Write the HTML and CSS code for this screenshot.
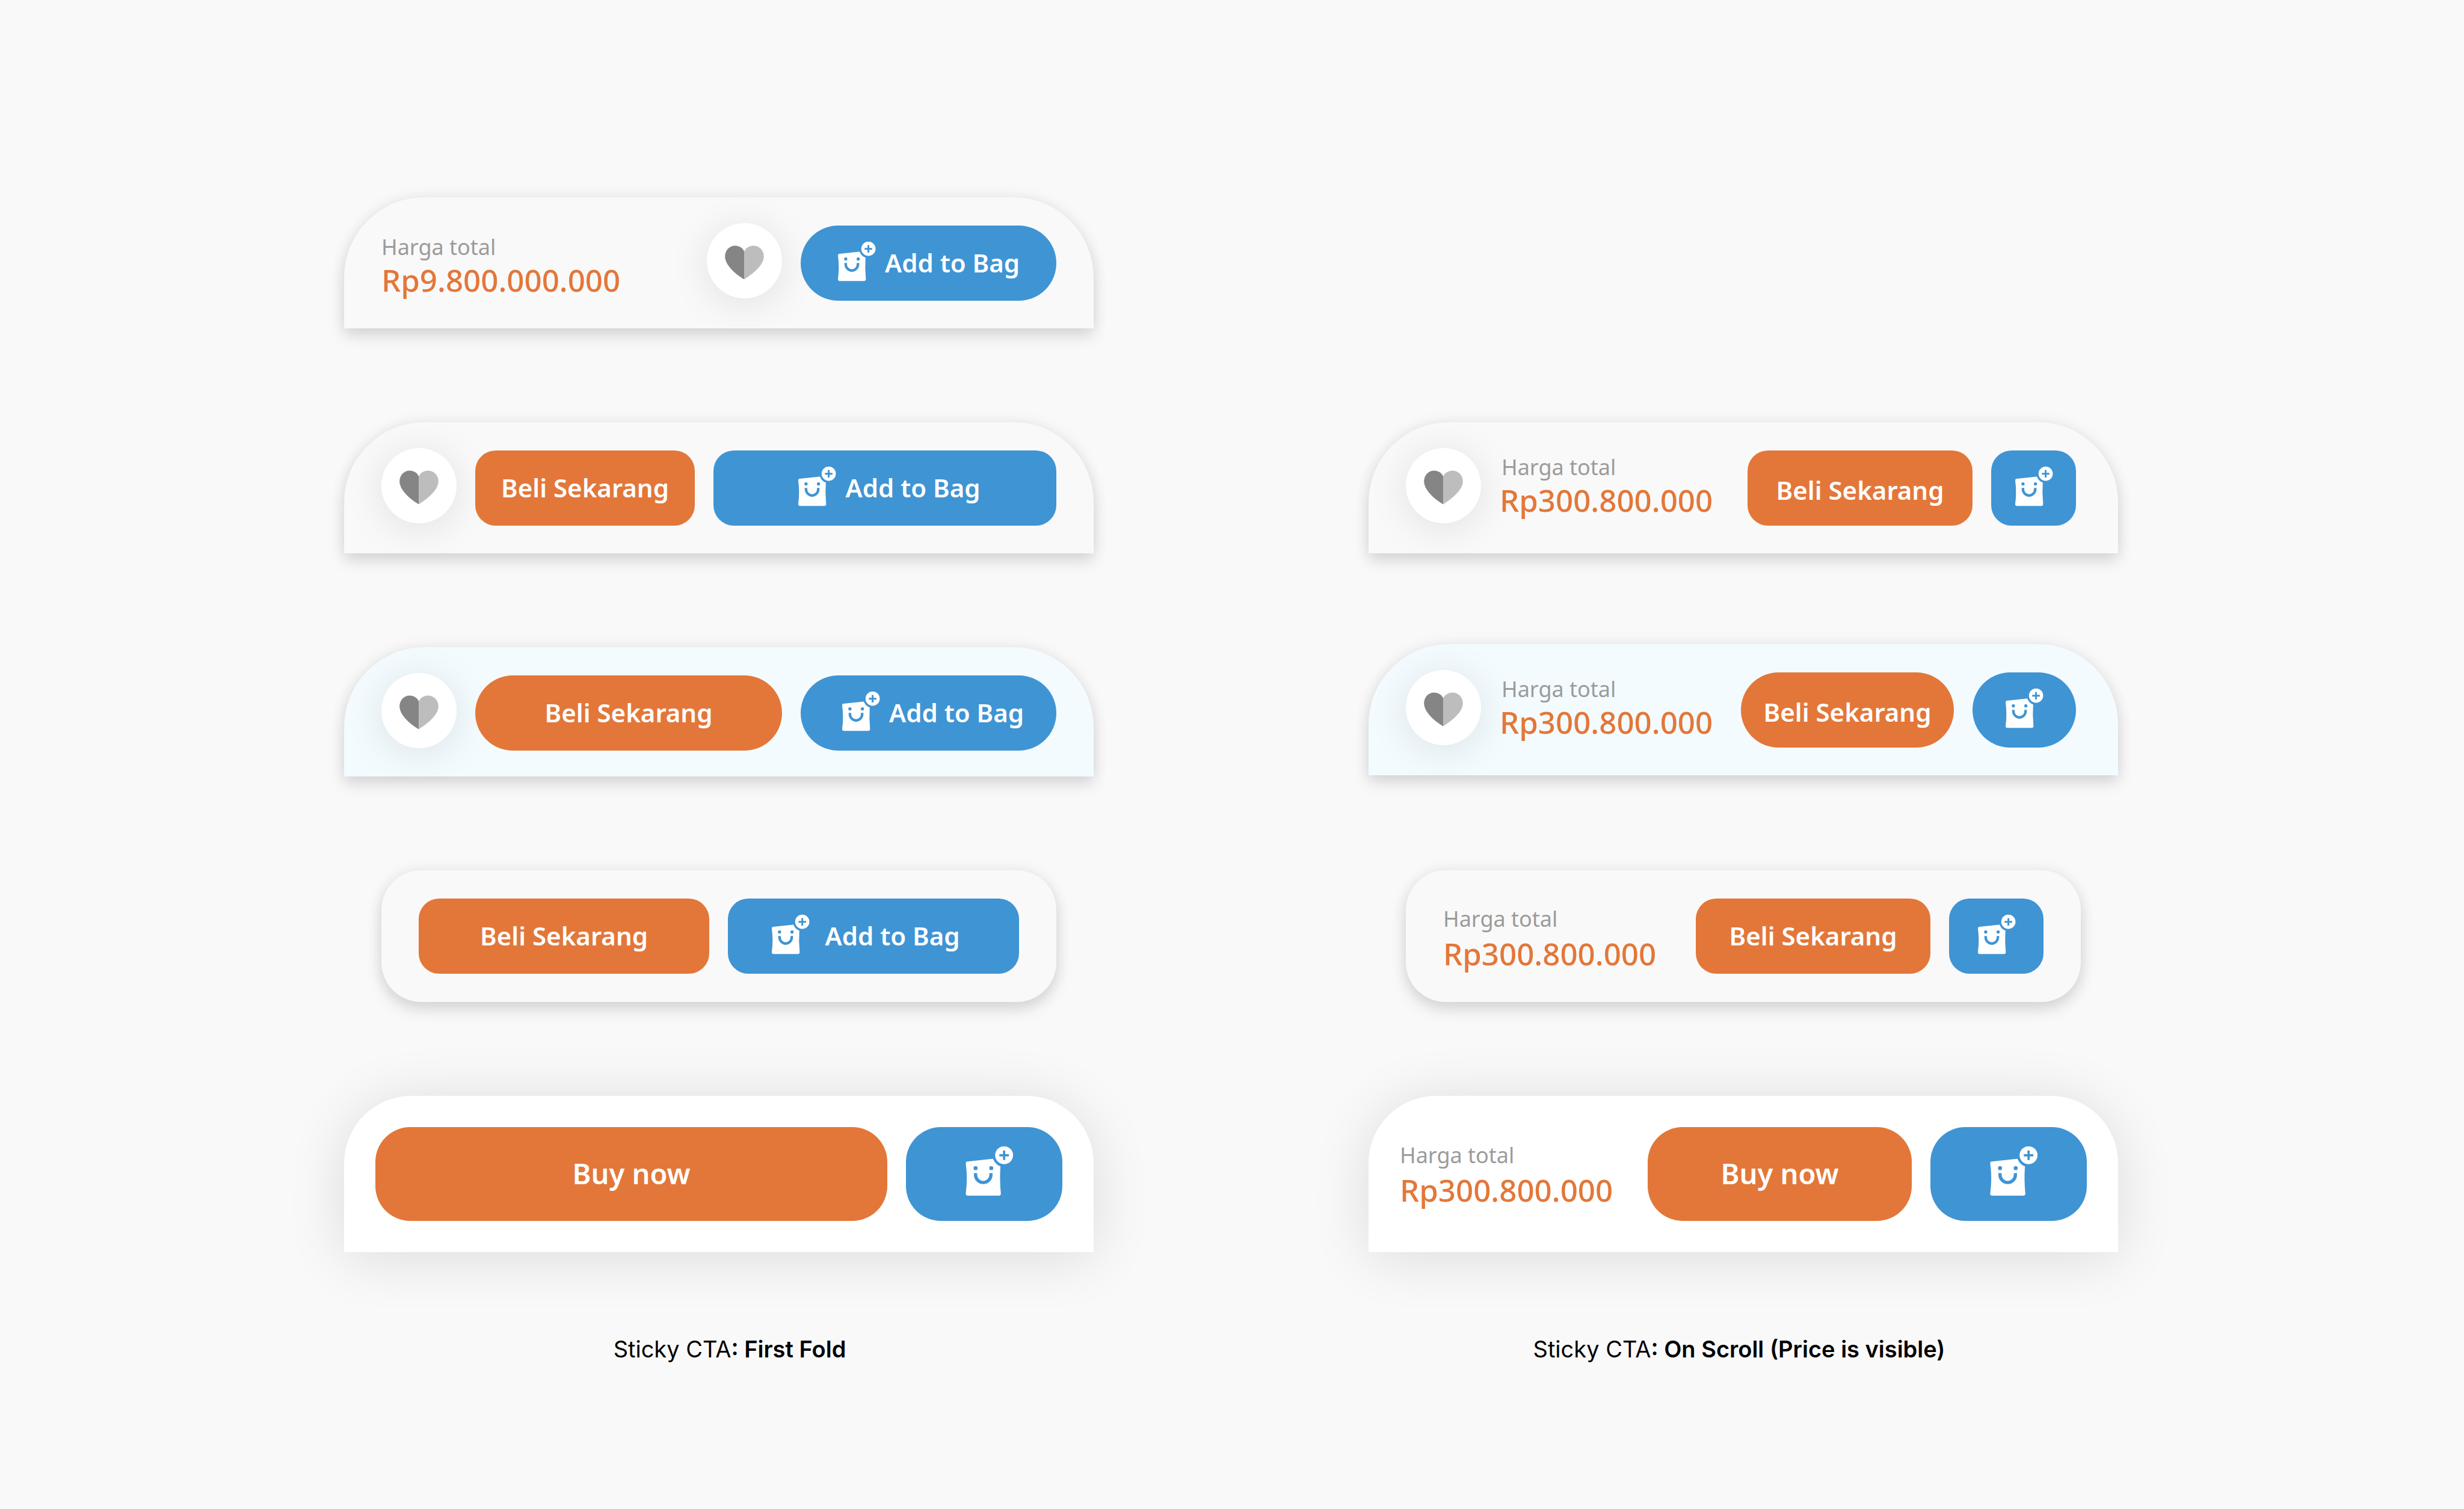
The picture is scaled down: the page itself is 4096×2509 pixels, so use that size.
FILE: index.html
```html
<!DOCTYPE html>
<html lang="id">
<head>
<meta charset="utf-8">
<meta name="viewport" content="width=device-width, initial-scale=1">
<title>Sticky CTA</title>
<link rel="stylesheet" href="styles.css">
</head>
<body>
<svg class="sprite" aria-hidden="true">
  <symbol id="heart" viewBox="219 218 353 306">
    <path fill="#858585" d="M393 523C300 470 220 388 220 316C220 260 261 219 312 219C348 219 378 238 393 270Z"/>
    <path fill="#bdbdbd" d="M393 523C492 462 571 385 571 316C571 260 528 219 476 219C440 219 410 238 393 270Z"/>
  </symbol>
  <symbol id="bag" viewBox="150 96 346 361">
    <path fill="#fff" d="M155 222Q155 210 167 209L346 190Q352 190 354 198A84 84 0 0 0 403 243Q396 340 406 438Q406 453 392 453H169Q155 453 155 438Q170 330 155 222Z"/>
    <circle cx="429" cy="164" r="64" fill="#fff"/>
    <g fill="#3f94d4">
      <rect x="211" y="242" width="28" height="28" rx="11"/>
      <rect x="323" y="242" width="28" height="28" rx="11"/>
    </g>
    <g fill="none" stroke="#3f94d4">
      <path stroke-width="23" d="M225 292V304A55 55 0 0 0 335 304V292"/>
      <path stroke-width="16" d="M395 164H463M429 130V198"/>
    </g>
  </symbol>
</svg>

<main class="board">
  <section class="bar bar--dome">
    <div class="price price--low">
      <span class="price__label">Harga total</span>
      <span class="price__value">Rp9.800.000.000</span>
    </div>
    <button class="fav" type="button" aria-label="Wishlist"><svg class="fav__icon"><use href="#heart"/></svg></button>
    <button class="btn btn--blue btn--pill w-425" type="button"><svg class="bag"><use href="#bag"/></svg>Add to Bag</button>
  </section>
  <div></div>

  <section class="bar bar--dome">
    <button class="fav" type="button" aria-label="Wishlist"><svg class="fav__icon"><use href="#heart"/></svg></button>
    <button class="btn btn--orange w-365" type="button">Beli Sekarang</button>
    <button class="btn btn--blue btn--grow btn--right" type="button"><svg class="bag"><use href="#bag"/></svg>Add to Bag</button>
  </section>
  <section class="bar bar--dome bar--inset">
    <button class="fav" type="button" aria-label="Wishlist"><svg class="fav__icon"><use href="#heart"/></svg></button>
    <div class="price price--beside">
      <span class="price__label">Harga total</span>
      <span class="price__value">Rp300.800.000</span>
    </div>
    <button class="btn btn--orange btn--drop w-374" type="button">Beli Sekarang</button>
    <button class="btn btn--blue w-141" type="button" aria-label="Add to Bag"><svg class="bag"><use href="#bag"/></svg></button>
  </section>

  <section class="bar bar--dome bar--ice bar--short">
    <button class="fav" type="button" aria-label="Wishlist"><svg class="fav__icon"><use href="#heart"/></svg></button>
    <button class="btn btn--orange btn--pill btn--grow" type="button">Beli Sekarang</button>
    <button class="btn btn--blue btn--pill btn--right w-425" type="button"><svg class="bag"><use href="#bag"/></svg>Add to Bag</button>
  </section>
  <section class="bar bar--dome bar--ice bar--inset bar--raised">
    <button class="fav" type="button" aria-label="Wishlist"><svg class="fav__icon"><use href="#heart"/></svg></button>
    <div class="price price--beside">
      <span class="price__label">Harga total</span>
      <span class="price__value">Rp300.800.000</span>
    </div>
    <button class="btn btn--orange btn--pill btn--drop w-354" type="button">Beli Sekarang</button>
    <button class="btn btn--blue btn--pill w-172" type="button" aria-label="Add to Bag"><svg class="bag"><use href="#bag"/></svg></button>
  </section>

  <section class="bar bar--card">
    <button class="btn btn--orange btn--grow" type="button">Beli Sekarang</button>
    <button class="btn btn--blue btn--grow btn--spread" type="button"><svg class="bag"><use href="#bag"/></svg>Add to Bag</button>
  </section>
  <section class="bar bar--card">
    <div class="price price--open price--low">
      <span class="price__label">Harga total</span>
      <span class="price__value">Rp300.800.000</span>
    </div>
    <button class="btn btn--orange w-390" type="button">Beli Sekarang</button>
    <button class="btn btn--blue w-157" type="button" aria-label="Add to Bag"><svg class="bag"><use href="#bag"/></svg></button>
  </section>

  <section class="bar bar--large">
    <button class="btn btn--orange btn--large btn--grow" type="button">Buy now</button>
    <button class="btn btn--blue btn--large btn--bag w-260" type="button" aria-label="Add to Bag"><svg class="bag bag--large"><use href="#bag"/></svg></button>
  </section>
  <section class="bar bar--large">
    <div class="price price--open">
      <span class="price__label">Harga total</span>
      <span class="price__value">Rp300.800.000</span>
    </div>
    <button class="btn btn--orange btn--large w-439" type="button">Buy now</button>
    <button class="btn btn--blue btn--large btn--bag w-260" type="button" aria-label="Add to Bag"><svg class="bag bag--large"><use href="#bag"/></svg></button>
  </section>

  <h2 class="caption caption--first">Sticky CTA<strong>: First Fold</strong></h2>
  <h2 class="caption caption--scroll">Sticky CTA<strong>: On Scroll (Price is visible)</strong></h2>
</main>
</body>
</html>
```
FILE: styles.css
```css
* {
  box-sizing: border-box;
}

body {
  margin: 0;
  background: #f9f9f9;
  font-family: "Noto Sans", sans-serif;
}

.sprite {
  display: none;
}

.board {
  display: grid;
  grid-template-columns: 1fr 1fr;
  gap: 156px 457px;
  align-items: start;
  padding: 328px 575px 0 572px;
}

/* Bars */
.bar {
  display: flex;
  align-items: center;
  gap: 31px;
  padding: 47px 62px;
  background: #f9f9f9;
  box-shadow: 0 13px 26px rgba(0, 0, 0, 0.12), 0 0 26px rgba(0, 0, 0, 0.07);
}

.bar--dome {
  padding-bottom: 46px;
  border-radius: 133px 133px 0 0;
}

.bar--inset {
  padding-right: 70px;
}

.bar--ice {
  background: #f3fbff;
}

.bar--short {
  padding-bottom: 43px;
}

.bar--raised {
  margin-top: -5px;
}

.bar--card {
  margin: 0 62px;
  border-radius: 66px;
}

.bar--large {
  padding: 52px;
  border-radius: 112px 112px 0 0;
  background: #fff;
  box-shadow: 0 8px 96px rgba(0, 0, 0, 0.12);
}

/* Price */
.price {
  display: flex;
  flex-direction: column;
  flex: 1;
  white-space: nowrap;
}

.price--low {
  margin-top: 6px;
}

.price--beside {
  margin-bottom: 10px;
}

.price--beside .price__label {
  padding-left: 3px;
}

.price--open {
  gap: 3px;
}

.price__label {
  color: #9b9b9b;
  font-size: 36px;
  line-height: 48px;
}

.price__value {
  color: #e37739;
  font-size: 51px;
  font-weight: 500;
  line-height: 60px;
}

/* Buttons */
.fav,
.btn {
  display: flex;
  align-items: center;
  justify-content: center;
  flex: none;
  border: 0;
  padding: 0;
  height: 125px;
  font-family: inherit;
  cursor: pointer;
}

.fav {
  width: 125px;
  margin: -4px 0 4px;
  padding-top: 5px;
  border-radius: 50%;
  background: #fff;
  box-shadow: 0 8px 66px rgba(0, 0, 0, 0.1);
}

.fav__icon {
  width: 65px;
  height: 57px;
}

.btn {
  position: relative;
  gap: 15px;
  padding-bottom: 2px;
  border-radius: 34px;
  color: #fff;
  font-size: 42px;
  font-weight: 600;
  line-height: 56px;
  white-space: nowrap;
}

.btn--orange {
  background: #e37739;
}

.btn--blue {
  background: #3f94d4;
}

.btn--pill {
  border-radius: 63px;
}

.btn--grow {
  flex: 1 1 50%;
}

.btn--right {
  padding-left: 14px;
}

.btn--drop {
  padding-top: 8px;
}

.btn--spread {
  gap: 25px;
  padding-right: 26px;
}

.btn--large {
  height: 156px;
  border-radius: 58px;
  font-size: 47px;
}

.btn--bag {
  padding: 0 0 6px 16px;
}

.bag {
  width: 64px;
  height: 67px;
  margin-bottom: 4px;
}

.bag--large {
  width: 81px;
  height: 84px;
}

.w-141 { width: 141px; }
.w-157 { width: 157px; }
.w-172 { width: 172px; }
.w-260 { width: 260px; }
.w-354 { width: 354px; }
.w-365 { width: 365px; }
.w-374 { width: 374px; }
.w-390 { width: 390px; }
.w-425 { width: 425px; }
.w-439 { width: 439px; }

/* Captions */
.caption {
  margin: -18px 0 0;
  color: #000;
  font-family: "Inter", sans-serif;
  font-size: 38px;
  font-weight: 400;
  line-height: 46px;
  text-align: center;
}

.caption strong {
  font-weight: 600;
}

.caption--first {
  padding-left: 36px;
}

.caption--scroll {
  padding-right: 14px;
}
```
